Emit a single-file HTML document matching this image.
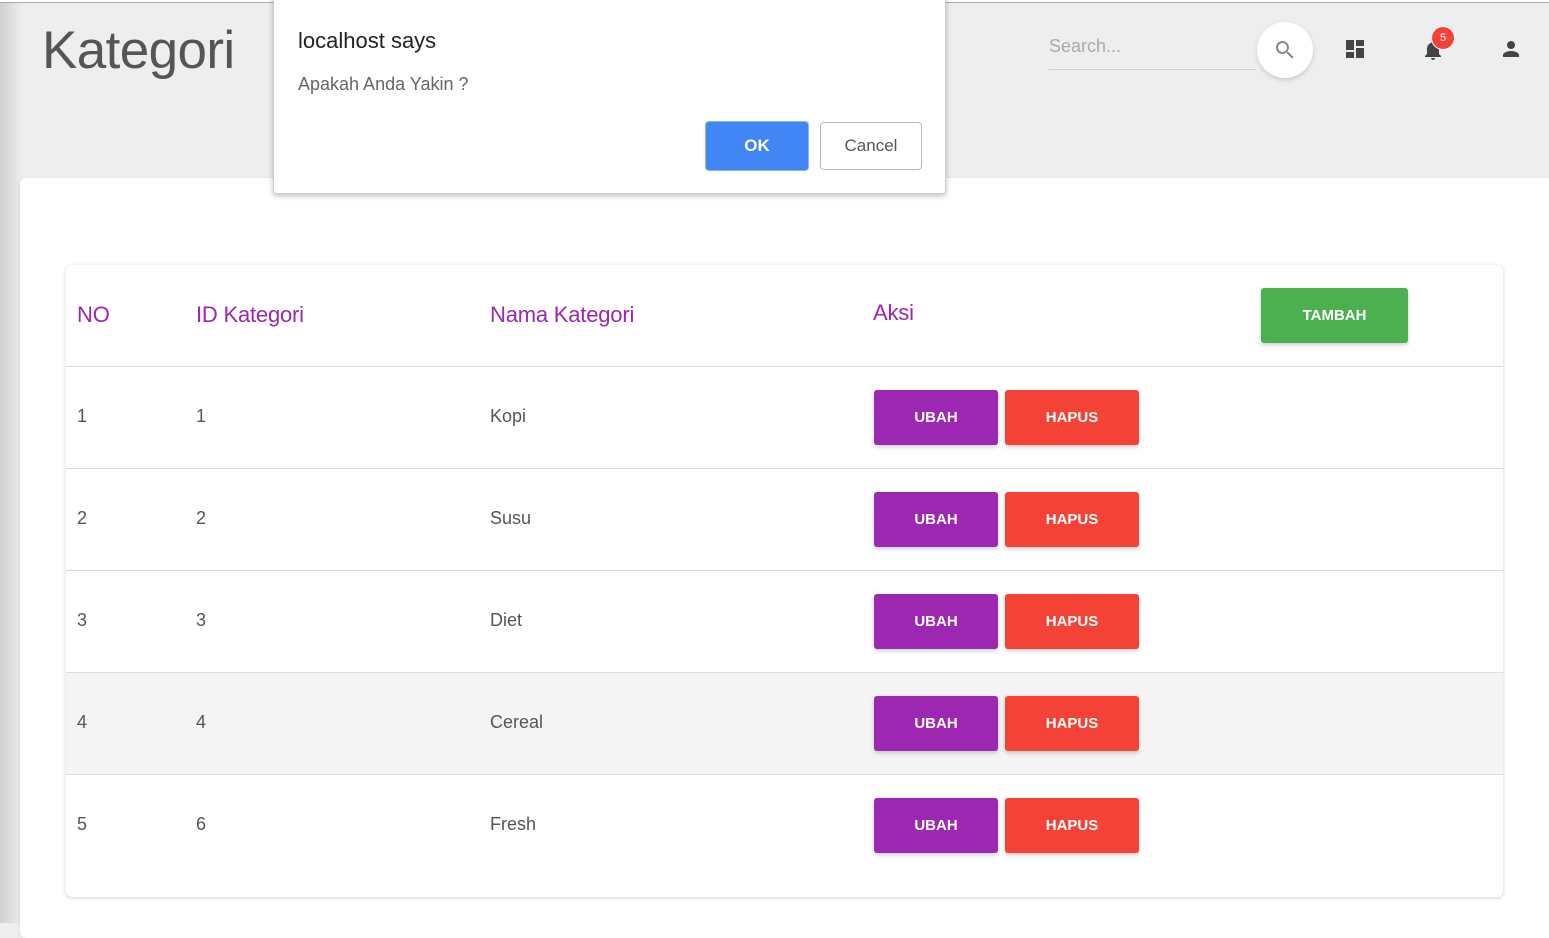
<!DOCTYPE html>
<html><head><meta charset="utf-8"><style>
*{box-sizing:border-box;margin:0;padding:0}
body{width:1549px;height:923px;overflow:hidden;background:#eeeeee;font-family:"Liberation Sans",sans-serif;position:relative}
.abs{position:absolute}
.topline{left:0;top:0;width:1549px;height:3px;background:#fff;border-bottom:1px solid #aaa}
.lshadow{left:0;top:3px;width:22px;height:920px;background:linear-gradient(to right,#cfcfcf,#eeeeee)}
.title{left:42px;top:20px;font-size:53px;font-weight:300;color:#555;letter-spacing:-0.6px}
.card{left:20px;top:178px;width:1540px;height:760px;background:#fff;border-radius:6px;box-shadow:0 1px 4px rgba(0,0,0,.1)}
.tbl{left:66px;top:265px;width:1437px;height:632px;background:#fff;border-radius:6px;box-shadow:0 1px 4px rgba(0,0,0,.18)}
.row{position:absolute;left:0;width:1437px;height:102px;border-top:1px solid #ddd}
.t{position:absolute;font-size:18px;color:#555;font-weight:300}
.h{position:absolute;font-size:22px;color:#9c27b0;font-weight:300;letter-spacing:-0.2px}
.btn{position:absolute;color:#fff;font-size:15px;font-weight:bold;text-align:center;border-radius:3px;box-shadow:0 2px 4px rgba(0,0,0,.2)}
.ub{left:808px;top:23px;width:124px;height:55px;line-height:55px;background:#9c27b0}
.hp{left:939px;top:23px;width:134px;height:55px;line-height:55px;background:#f44336}
.dlg{left:273px;top:-4px;width:673px;height:198px;background:#fff;border:1px solid #ccc;border-radius:0 0 3px 3px;box-shadow:0 2px 6px rgba(0,0,0,.25)}
</style></head><body>
<div class="abs topline"></div>
<div class="abs lshadow"></div>
<div class="abs title">Kategori</div>

<div class="abs" style="left:1049px;top:36px;font-size:18px;color:#aaa">Search...</div>
<div class="abs" style="left:1049px;top:69px;width:207px;height:1px;background:#d0d0d0"></div>
<div class="abs" style="left:1257px;top:22px;width:56px;height:56px;border-radius:50%;background:#fff;box-shadow:0 2px 5px rgba(0,0,0,.15)"></div>
<svg class="abs" style="left:1273px;top:38px" width="24" height="24" viewBox="0 0 24 24"><path fill="#888" d="M15.5 14h-.8l-.3-.3A6.5 6.5 0 1 0 9.5 16c1.6 0 3.1-.6 4.2-1.6l.3.3v.8l5 5 1.5-1.5-5-5zm-6 0C7 14 5 12 5 9.5S7 5 9.5 5 14 7 14 9.5 12 14 9.5 14z"/></svg>
<svg class="abs" style="left:1343px;top:37px" width="24" height="24" viewBox="0 0 24 24"><path fill="#444" d="M3 13h8V3H3v10zm0 8h8v-6H3v6zm10 0h8V11h-8v10zm0-18v6h8V3h-8z"/></svg>
<svg class="abs" style="left:1421px;top:38px" width="24" height="24" viewBox="0 0 24 24"><path fill="#444" d="M12 22c1.1 0 2-.9 2-2h-4c0 1.1.9 2 2 2zm6-6v-5c0-3.1-1.6-5.6-4.5-6.3V4c0-.8-.7-1.5-1.5-1.5s-1.5.7-1.5 1.5v.7C7.6 5.4 6 7.9 6 11v5l-2 2v1h16v-1l-2-2z"/></svg>
<div class="abs" style="left:1431px;top:26px;width:24px;height:24px;border-radius:50%;background:#f44336;color:#fff;font-size:11px;text-align:center;line-height:22px;border:1px solid #fff">5</div>
<svg class="abs" style="left:1499px;top:37px" width="24" height="24" viewBox="0 0 24 24"><path fill="#444" d="M12 12c2.2 0 4-1.8 4-4s-1.8-4-4-4-4 1.8-4 4 1.8 4 4 4zm0 2c-2.7 0-8 1.3-8 4v2h16v-2c0-2.7-5.3-4-8-4z"/></svg>

<div class="abs card"></div>
<div class="abs tbl">
 <div class="h" style="left:11px;top:37px">NO</div>
 <div class="h" style="left:130px;top:37px">ID Kategori</div>
 <div class="h" style="left:424px;top:37px">Nama Kategori</div>
 <div class="h" style="left:807px;top:35px">Aksi</div>
 <div class="btn" style="left:1195px;top:23px;width:147px;height:55px;line-height:55px;background:#4caf50">TAMBAH</div>

 <div class="row" style="top:101px"><div class="t" style="left:11px;top:39px">1</div><div class="t" style="left:130px;top:39px">1</div><div class="t" style="left:424px;top:39px">Kopi</div><div class="btn ub">UBAH</div><div class="btn hp">HAPUS</div></div>
 <div class="row" style="top:203px"><div class="t" style="left:11px;top:39px">2</div><div class="t" style="left:130px;top:39px">2</div><div class="t" style="left:424px;top:39px">Susu</div><div class="btn ub">UBAH</div><div class="btn hp">HAPUS</div></div>
 <div class="row" style="top:305px"><div class="t" style="left:11px;top:39px">3</div><div class="t" style="left:130px;top:39px">3</div><div class="t" style="left:424px;top:39px">Diet</div><div class="btn ub">UBAH</div><div class="btn hp">HAPUS</div></div>
 <div class="row" style="top:407px;background:#f4f4f4"><div class="t" style="left:11px;top:39px">4</div><div class="t" style="left:130px;top:39px">4</div><div class="t" style="left:424px;top:39px">Cereal</div><div class="btn ub">UBAH</div><div class="btn hp">HAPUS</div></div>
 <div class="row" style="top:509px"><div class="t" style="left:11px;top:39px">5</div><div class="t" style="left:130px;top:39px">6</div><div class="t" style="left:424px;top:39px">Fresh</div><div class="btn ub">UBAH</div><div class="btn hp">HAPUS</div></div>
</div>

<div class="abs dlg">
 <div class="abs" style="left:24px;top:31px;font-size:22px;color:#222">localhost says</div>
 <div class="abs" style="left:24px;top:77px;font-size:18px;color:#666">Apakah Anda Yakin ?</div>
 <div class="abs" style="left:431px;top:124px;width:104px;height:50px;background:#4285f4;border-radius:4px;color:#fff;font-weight:bold;font-size:17px;text-align:center;line-height:48px;border:1px solid #8ab4f8">OK</div>
 <div class="abs" style="left:546px;top:125px;width:102px;height:48px;background:#fff;border:1px solid #bbb;border-radius:4px;color:#555;font-size:17px;text-align:center;line-height:46px">Cancel</div>
</div>
</body></html>
